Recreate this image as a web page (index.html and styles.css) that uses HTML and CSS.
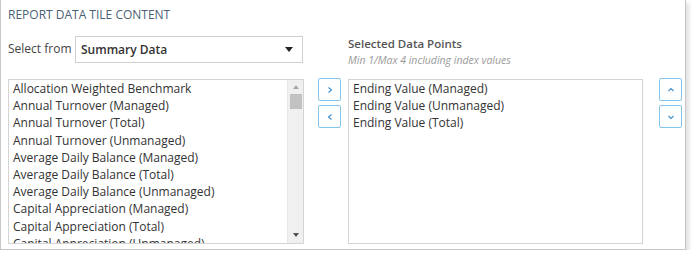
FILE: index.html
```html
<!DOCTYPE html>
<html>
<head>
<meta charset="utf-8">
<link rel="stylesheet" href="styles.css">
</head>
<body>
<div class="panel">
  <div class="title">REPORT DATA TILE CONTENT</div>
  <div class="content">
    <div class="col-left">
      <div class="head-left">
        <span class="label">Select from</span>
        <div class="select">
          <span class="select-text">Summary Data</span>
          <span class="caret"></span>
        </div>
      </div>
      <div class="listbox">
        <div class="items">
          <div class="item">Allocation Weighted Benchmark</div>
          <div class="item">Annual Turnover (Managed)</div>
          <div class="item">Annual Turnover (Total)</div>
          <div class="item">Annual Turnover (Unmanaged)</div>
          <div class="item">Average Daily Balance (Managed)</div>
          <div class="item">Average Daily Balance (Total)</div>
          <div class="item">Average Daily Balance (Unmanaged)</div>
          <div class="item">Capital Appreciation (Managed)</div>
          <div class="item">Capital Appreciation (Total)</div>
          <div class="item">Capital Appreciation (Unmanaged)</div>
        </div>
        <div class="scrollbar">
          <span class="sb-up"></span>
          <span class="sb-thumb"></span>
          <span class="sb-track"></span>
          <span class="sb-down"></span>
        </div>
      </div>
    </div>
    <div class="col-btns move">
      <button class="btn"><svg width="8" height="8" viewBox="0 0 8 8"><path d="M2.5 1.5 L5.5 4 L2.5 6.5" fill="none" stroke="#3a8fd0" stroke-width="1.1"/></svg></button>
      <button class="btn"><svg width="8" height="8" viewBox="0 0 8 8"><path d="M5.5 1.5 L2.5 4 L5.5 6.5" fill="none" stroke="#3a8fd0" stroke-width="1.1"/></svg></button>
    </div>
    <div class="col-right">
      <div class="head-right">
        <div class="sel-title">Selected Data Points</div>
        <div class="sel-sub">Min 1/Max 4 including index values</div>
      </div>
      <div class="listbox right">
        <div class="items">
          <div class="item">Ending Value (Managed)</div>
          <div class="item">Ending Value (Unmanaged)</div>
          <div class="item">Ending Value (Total)</div>
        </div>
      </div>
    </div>
    <div class="col-btns order">
      <button class="btn"><svg width="8" height="8" viewBox="0 0 8 8"><path d="M1.5 5 L4 2.5 L6.5 5" fill="none" stroke="#3a8fd0" stroke-width="1.1"/></svg></button>
      <button class="btn"><svg width="8" height="8" viewBox="0 0 8 8"><path d="M1.5 3 L4 5.5 L6.5 3" fill="none" stroke="#3a8fd0" stroke-width="1.1"/></svg></button>
    </div>
  </div>
</div>
</body>
</html>
```
FILE: styles.css
```css
html, body {
  margin: 0;
  padding: 0;
  background: #ffffff;
}
body {
  font-family: "Open Sans", "Noto Sans", sans-serif;
  color: #333333;
}
.panel {
  width: 686px;
  height: 250px;
  border: 1px solid #c6c6c6;
  border-top: none;
  box-sizing: border-box;
  box-shadow: 3px 3px 4px rgba(0, 0, 0, 0.12);
  padding: 0 0 0 7px;
}
.title {
  font-size: 12px;
  line-height: 16px;
  padding-top: 7px;
  color: #4b5f73;
}
.content {
  display: flex;
  margin-top: 13px;
}
.col-left {
  width: 296px;
  display: flex;
  flex-direction: column;
}
.head-left {
  display: flex;
  height: 43px;
  align-items: flex-start;
}
.label {
  font-size: 12px;
  color: #444;
  line-height: 26px;
  width: 67px;
}
.select {
  width: 228px;
  height: 27px;
  box-sizing: border-box;
  border: 1px solid #d0d0d0;
  display: flex;
  align-items: center;
  justify-content: space-between;
  padding: 0 9px 0 5px;
}
.select-text {
  font-size: 12px;
  font-weight: 600;
  color: #333;
}
.caret {
  width: 0;
  height: 0;
  border-left: 4px solid transparent;
  border-right: 4px solid transparent;
  border-top: 5px solid #222;
}
.listbox {
  height: 165px;
  box-sizing: border-box;
  border: 1px solid #d4d4d4;
  display: flex;
  overflow: hidden;
}
.items {
  flex: 1;
  overflow: hidden;
  padding-left: 4px;
}
.item {
  font-size: 12px;
  line-height: 17.2px;
  white-space: nowrap;
  color: #333;
}
.scrollbar {
  width: 15px;
  background: #f0f0f0;
  display: flex;
  flex-direction: column;
  align-items: center;
  border-left: 1px solid #e8e8e8;
}
.sb-up {
  margin-top: 5px;
  width: 0;
  height: 0;
  border-left: 3.5px solid transparent;
  border-right: 3.5px solid transparent;
  border-bottom: 4px solid #a8a8a8;
}
.sb-thumb {
  margin-top: 5px;
  width: 12px;
  height: 15px;
  background: #c2c2c2;
}
.sb-track {
  flex: 1;
}
.sb-down {
  margin-bottom: 6px;
  width: 0;
  height: 0;
  border-left: 3.5px solid transparent;
  border-right: 3.5px solid transparent;
  border-top: 4px solid #505050;
}
.col-btns {
  display: flex;
  flex-direction: column;
  gap: 4px;
  padding-top: 42px;
}
.col-btns.move {
  margin-left: 14px;
}
.col-btns.order {
  margin-left: 16px;
}
.btn {
  width: 23px;
  height: 23px;
  box-sizing: border-box;
  border: 1px solid #84c4ea;
  border-radius: 2px;
  background: #ffffff;
  padding: 0;
  display: flex;
  align-items: center;
  justify-content: center;
}
.col-right {
  margin-left: 7px;
  width: 295px;
  display: flex;
  flex-direction: column;
}
.head-right {
  height: 43px;
  box-sizing: border-box;
  padding-top: 0px;
}
.sel-title {
  font-size: 11.5px;
  font-weight: 600;
  color: #555;
  line-height: 16px;
}
.sel-sub {
  font-size: 10.5px;
  font-style: italic;
  color: #9a9a9a;
  line-height: 16px;
}
.listbox.right .items {
  padding-left: 4px;
}
```
